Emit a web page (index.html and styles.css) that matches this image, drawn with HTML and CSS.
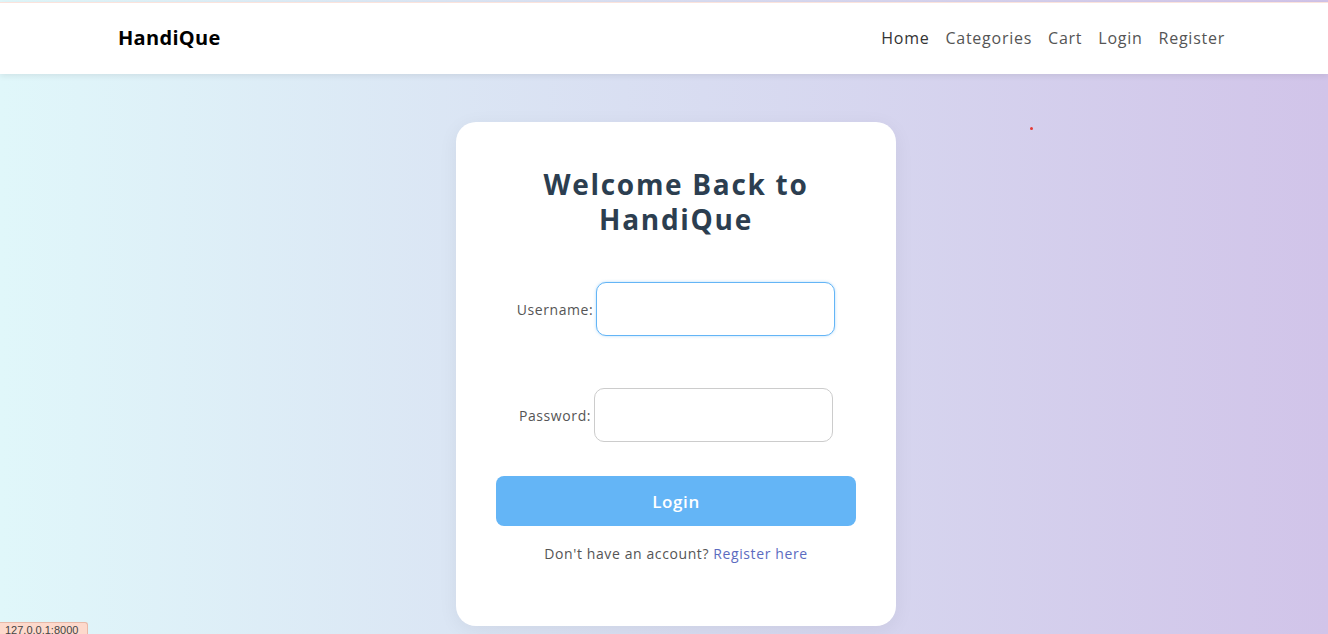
FILE: index.html
```html
<!DOCTYPE html>
<html lang="en">
<head>
<meta charset="utf-8">
<title>HandiQue - Login</title>
<link rel="stylesheet" href="styles.css">
</head>
<body>
<header class="navbar">
  <a class="brand" href="#">HandiQue</a>
  <nav class="nav-links">
    <a class="nav-link active" href="#">Home</a>
    <a class="nav-link" href="#">Categories</a>
    <a class="nav-link" href="#">Cart</a>
    <a class="nav-link" href="#">Login</a>
    <a class="nav-link" href="#">Register</a>
  </nav>
</header>
<main class="page">
  <div class="card">
    <h1 class="title">Welcome Back to<br>HandiQue</h1>
    <form class="form">
      <div class="field">
        <label class="label" for="u">Username:</label>
        <input class="input focused" id="u" type="text">
      </div>
      <div class="field">
        <label class="label" for="p">Password:</label>
        <input class="input" id="p" type="password">
      </div>
      <button class="btn" type="button">Login</button>
      <p class="signup">Don't have an account? <a class="signup-link" href="#">Register here</a></p>
    </form>
  </div>
  <span class="dot"></span>
</main>
<div class="status">127.0.0.1:8000</div>
</body>
</html>
```
FILE: styles.css
```css
* { box-sizing: border-box; }
html, body { margin: 0; padding: 0; height: 100%; }
body {
  font-family: "Open Sans", "DejaVu Sans", sans-serif;
  background: linear-gradient(90deg, #e0f7fa 0%, #d1c4e9 100%);
  overflow: hidden;
  position: relative;
}
.navbar {
  background: #fff;
  border-top: 1px solid #fbe3dc;
  margin-top: 2px;
  height: 72px;
  display: flex;
  align-items: center;
  justify-content: space-between;
  padding: 0 103px 2px 118px;
  box-shadow: 0 2px 6px rgba(0,0,0,0.08);
  position: relative;
  z-index: 2;
}
.brand {
  font-weight: 700;
  font-size: 20px;
  letter-spacing: 0.3px;
  color: #000;
  text-decoration: none;
}
.nav-links { display: flex; gap: 16px; }
.nav-link {
  font-size: 16px;
  letter-spacing: 0.75px;
  color: #555;
  text-decoration: none;
}
.nav-link.active { color: #333; }
.page {
  display: flex;
  justify-content: center;
  padding: 48px 0 0 24px;
}
.card {
  width: 440px;
  height: 504px;
  background: #fff;
  border-radius: 20px;
  padding: 40px 40px;
  box-shadow: 0 4px 20px rgba(0,0,0,0.06);
  text-align: center;
}
.title {
  margin: 5px 0 0;
  font-size: 28px;
  line-height: 35px;
  font-weight: 700;
  letter-spacing: 1.7px;
  color: #2c3e50;
}
.form { margin-top: 45px; }
.field {
  display: flex;
  justify-content: center;
  align-items: center;
  gap: 3px;
  margin-bottom: 52px;
}
.field + .field { margin-bottom: 34px; }
.label { font-size: 14px; letter-spacing: 0.6px; color: #555; }
.input {
  width: 239px;
  height: 54px;
  border: 1px solid #ccc;
  border-radius: 10px;
  padding: 0 12px;
  font-size: 16px;
  outline: none;
  background: #fff;
}
.input.focused {
  border-color: #64b5f6;
  box-shadow: 0 0 3px rgba(100,181,246,0.5);
}
.btn {
  display: block;
  width: 360px;
  height: 50px;
  border: none;
  border-radius: 8px;
  background: #64b5f6;
  color: #fff;
  font-family: inherit;
  font-size: 17px;
  font-weight: 600;
  letter-spacing: 0.6px;
}
.signup {
  margin: 18px 0 0;
  font-size: 14px;
  letter-spacing: 0.6px;
  color: #555;
}
.signup-link { color: #5c6bc0; text-decoration: none; }
.dot {
  position: absolute;
  left: 1030px;
  top: 127px;
  width: 3px;
  height: 3px;
  background: #e53935;
  border-radius: 50%;
}
.status {
  position: absolute;
  left: 0;
  bottom: 0;
  height: 12px;
  width: 88px;
  background: #fdd9cc;
  border: 1px solid #e8b9a8;
  border-left: none;
  border-bottom: none;
  border-top-right-radius: 3px;
  font-family: "Liberation Sans", sans-serif;
  font-size: 11px;
  line-height: 14px;
  color: #444;
  padding-left: 5px;
  overflow: hidden;
}
```
